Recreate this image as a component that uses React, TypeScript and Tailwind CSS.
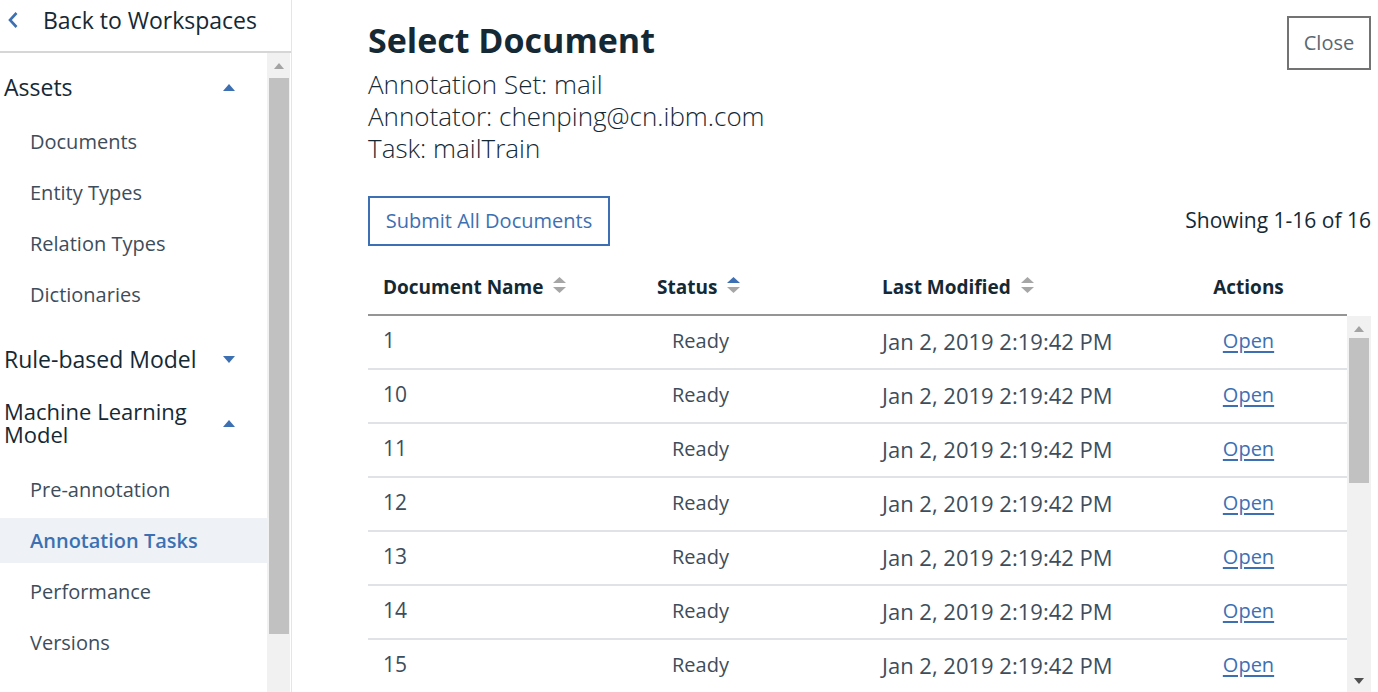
import React from "react";

const font = { fontFamily: '"Open Sans", "Liberation Sans", sans-serif' };

function Caret({ up }: { up?: boolean }) {
  return (
    <svg width="12" height="7" viewBox="0 0 12 7" className="shrink-0">
      {up ? <path d="M6 0 L12 7 L0 7 Z" fill="#3d70b2" /> : <path d="M0 0 L12 0 L6 7 Z" fill="#3d70b2" />}
    </svg>
  );
}

function SortIcon({ active }: { active?: boolean }) {
  return (
    <svg width="13" height="17" viewBox="0 0 13 17" className="ml-[10px] -mt-[4px]">
      <path d="M6.5 0 L13 6 L0 6 Z" fill={active ? "#3d70b2" : "#a6a6a6"} />
      <path d="M0 10 L13 10 L6.5 16 Z" fill="#a6a6a6" />
    </svg>
  );
}

function ScrollTrack({
  thumbTop,
  thumbHeight,
  className,
  showDown,
}: {
  thumbTop: string;
  thumbHeight: string;
  className: string;
  showDown?: boolean;
}) {
  return (
    <div className={`flex flex-col items-center bg-[#f1f1f1] ${className}`}>
      <svg width="10" height="6" viewBox="0 0 10 6" className="mt-[10px]">
        <path d="M5 0 L10 6 L0 6 Z" fill="#a3a3a3" />
      </svg>
      <div className={`w-[20px] bg-[#c1c1c1] ${thumbTop} ${thumbHeight}`} />
      <div className="flex-1" />
      {showDown && (
        <svg width="10" height="6" viewBox="0 0 10 6" className="mb-[8px]">
          <path d="M0 0 L10 0 L5 6 Z" fill="#505050" />
        </svg>
      )}
    </div>
  );
}

function NavItem({ label, active }: { label: string; active?: boolean }) {
  return (
    <div
      className={`h-[45px] mb-[6px] flex items-center pl-[30px] text-[20px] ${
        active ? "bg-[#eef2f6] text-[#3d70b2] font-semibold" : "text-[#3d4d5b]"
      }`}
    >
      {label}
    </div>
  );
}

const rows = ["1", "10", "11", "12", "13", "14", "15", "16"];

export default function App() {
  return (
    <div className="flex h-[692px] w-[1378px] overflow-hidden bg-white text-[#152935]" style={font}>
      {/* Sidebar */}
      <aside className="w-[292px] shrink-0 flex flex-col border-r border-[#e5e5e5]">
        <div className="h-[53px] shrink-0 border-b-2 border-[#d6d6d6] flex items-start">
          <div className="h-[40px] flex items-center pl-[7px]">
            <svg width="12" height="18" viewBox="0 0 12 18">
              <path d="M9.5 2 L3 9 L9.5 16" fill="none" stroke="#3d70b2" strokeWidth="2.6" />
            </svg>
            <span className="ml-[24px] text-[23px]">Back to Workspaces</span>
          </div>
        </div>
        <div className="flex flex-1 min-h-0">
          <nav className="w-[267px] pt-[11px]">
            <div className="min-h-[46px] flex items-center justify-between pl-[4px] pr-[32px] text-[23px]">
              Assets <Caret up />
            </div>
            <div className="pt-[9px]">
              <NavItem label="Documents" />
              <NavItem label="Entity Types" />
              <NavItem label="Relation Types" />
              <NavItem label="Dictionaries" />
            </div>
            <div className="mt-[19px] min-h-[46px] flex items-center justify-between pl-[4px] pr-[32px] text-[23px]">
              Rule-based Model <Caret />
            </div>
            <div className="mt-[12px] pt-[6px] pb-[12px] flex items-center justify-between pl-[4px] pr-[32px] text-[22px] leading-[23px]">
              <span>
                Machine Learning
                <br />
                Model
              </span>
              <Caret up />
            </div>
            <div className="pt-[9px]">
              <NavItem label="Pre-annotation" />
              <NavItem label="Annotation Tasks" active />
              <NavItem label="Performance" />
              <NavItem label="Versions" />
            </div>
          </nav>
          <ScrollTrack className="w-[23px]" thumbTop="mt-[9px]" thumbHeight="h-[556px]" />
        </div>
      </aside>

      {/* Main */}
      <main className="flex-1 min-w-0 flex flex-col pl-[76px] pr-[7px] pt-[16px]">
        <div className="flex justify-between items-start">
          <div>
            <h1 className="text-[34px] font-bold leading-[48px]">Select Document</h1>
            <div className="mt-[4px] text-[26px] font-light leading-[32px]">
              <div>Annotation Set: mail</div>
              <div>Annotator: chenping@cn.ibm.com</div>
              <div>Task: mailTrain</div>
            </div>
          </div>
          <button className="w-[84px] h-[54px] border-2 border-[#737373] text-[20px] text-[#5a6872]">Close</button>
        </div>

        <div className="mt-[32px] flex items-center justify-between">
          <button className="w-[242px] h-[50px] border-2 border-[#3d70b2] text-[20px] text-[#3d70b2]">
            Submit All Documents
          </button>
          <span className="text-[21px]">Showing 1-16 of 16</span>
        </div>

        <div className="mt-[20px] flex flex-col flex-1 min-h-0">
          <div className="mr-[24px] h-[50px] shrink-0 border-b-2 border-[#959595] flex items-center pb-[6px] text-[19px] font-bold">
            <div className="w-[274px] pl-[15px] flex items-center">
              Document Name <SortIcon />
            </div>
            <div className="w-[225px] pl-[15px] flex items-center">
              Status <SortIcon active />
            </div>
            <div className="w-[283px] pl-[15px] flex items-center">
              Last Modified <SortIcon />
            </div>
            <div className="flex-1 text-center">Actions</div>
          </div>
          <div className="flex flex-1 min-h-0">
            <div className="flex-1 overflow-hidden">
              {rows.map((r) => (
                <div
                  key={r}
                  className="h-[54px] border-b-2 border-[#dfe3e6] flex items-center pb-[2px] text-[20px] text-[#3d4d5b]"
                >
                  <div className="w-[274px] pl-[15px] text-[21px]">{r}</div>
                  <div className="w-[225px] pl-[30px]">Ready</div>
                  <div className="w-[283px] pl-[15px] text-[22px]">Jan 2, 2019 2:19:42 PM</div>
                  <div className="flex-1 text-center">
                    <a className="text-[#3d70b2] underline underline-offset-[3px]" href="#">
                      Open
                    </a>
                  </div>
                </div>
              ))}
            </div>
            <ScrollTrack className="w-[24px]" thumbTop="mt-[6px]" thumbHeight="h-[145px]" showDown />
          </div>
        </div>
      </main>
    </div>
  );
}
